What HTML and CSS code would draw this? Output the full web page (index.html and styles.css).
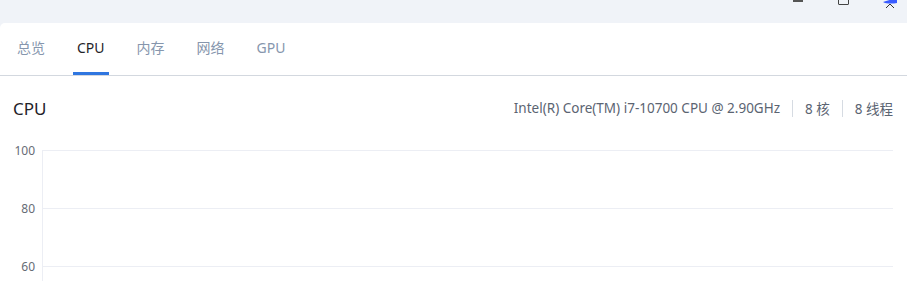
FILE: index.html
```html
<!DOCTYPE html>
<html lang="zh">
<head>
<meta charset="utf-8">
<title>CPU</title>
<link rel="stylesheet" href="styles.css">
</head>
<body>
<div class="titlebar">
  <div class="winctl">
    <span class="ctl-min"></span>
    <span class="ctl-max"></span>
    <span class="ctl-close">
      <svg width="14" height="10" viewBox="0 0 14 10"><path d="M0 2 Q6 0 14 -2 L14 3 Q8 4 2 3 Z" fill="#3a5cff"/><path d="M3 8 L7 4 L11 8" stroke="#333" stroke-width="1" fill="none"/></svg>
    </span>
  </div>
</div>
<main class="card">
  <nav class="tabs">
    <a class="tab">总览</a>
    <a class="tab active">CPU</a>
    <a class="tab">内存</a>
    <a class="tab">网络</a>
    <a class="tab">GPU</a>
  </nav>
  <section class="panel">
    <header class="panel-head">
      <h2 class="panel-title">CPU</h2>
      <div class="specs">
        <span class="spec">Intel(R) Core(TM) i7-10700 CPU @ 2.90GHz</span>
        <span class="sep"></span>
        <span class="spec">8 核</span>
        <span class="sep"></span>
        <span class="spec">8 线程</span>
      </div>
    </header>
    <div class="chart">
      <div class="row"><span class="ylabel">100</span><span class="grid"></span></div>
      <div class="row"><span class="ylabel">80</span><span class="grid"></span></div>
      <div class="row"><span class="ylabel">60</span><span class="grid"></span></div>
    </div>
  </section>
</main>
</body>
</html>
```
FILE: styles.css
```css
* { box-sizing: border-box; }
html, body { margin: 0; padding: 0; }
body {
  background: #f0f3f8;
  font-family: "Noto Sans", "Noto Sans CJK SC", sans-serif;
  width: 907px;
  height: 281px;
  overflow: hidden;
}
.titlebar {
  height: 23px;
  position: relative;
}
.winctl { position: absolute; top: 0; left: 0; width: 100%; height: 10px; }
.ctl-min {
  position: absolute; left: 793px; top: 0; width: 10px; height: 2px; background: #555;
}
.ctl-max {
  position: absolute; left: 838px; top: -6px; width: 11px; height: 11px;
  border: 1px solid #444; border-radius: 1px;
}
.ctl-close { position: absolute; left: 883px; top: 0; width: 14px; height: 10px; }
.ctl-close svg { display: block; }
.card {
  background: #fff;
  border-radius: 5px 0 0 0;
  height: 258px;
  overflow: hidden;
}
.tabs {
  display: flex;
  gap: 24px;
  padding-left: 13px;
  border-bottom: 1px solid #d3d8df;
  height: 53px;
}
.tab {
  position: relative;
  padding: 15px 4px 0;
  font-size: 14px;
  line-height: 20px;
  color: #8696ad;
}
.tab.active { color: #1f2329; }
.tab.active::after {
  content: "";
  position: absolute;
  left: 0; right: 0; bottom: 0;
  height: 3px;
  background: #2f76e0;
}
.panel { padding: 0 14px 0 13px; }
.panel-head {
  display: flex;
  align-items: center;
  justify-content: space-between;
  height: 64px;
}
.panel-title {
  margin: 0;
  font-size: 17px;
  font-weight: 400;
  color: #1f2329;
}
.specs {
  display: flex;
  align-items: center;
  gap: 12px;
  font-size: 13.5px;
  color: #5b6472;
}
.sep { width: 1px; height: 17px; background: #d6dbe2; }
.chart {
  position: relative;
  display: flex;
  flex-direction: column;
  gap: 49px;
  margin-top: 6px;
}
.row { display: flex; align-items: center; height: 9px; }
.ylabel {
  width: 22px;
  text-align: right;
  font-size: 12px;
  color: #666c75;
}
.grid {
  flex: 1;
  height: 1px;
  background: #eceef4;
  margin-left: 7px;
}
.chart::before {
  content: "";
  position: absolute;
  left: 29px; top: 4px; bottom: -40px;
  width: 1px;
  background: #eceef4;
}
```
